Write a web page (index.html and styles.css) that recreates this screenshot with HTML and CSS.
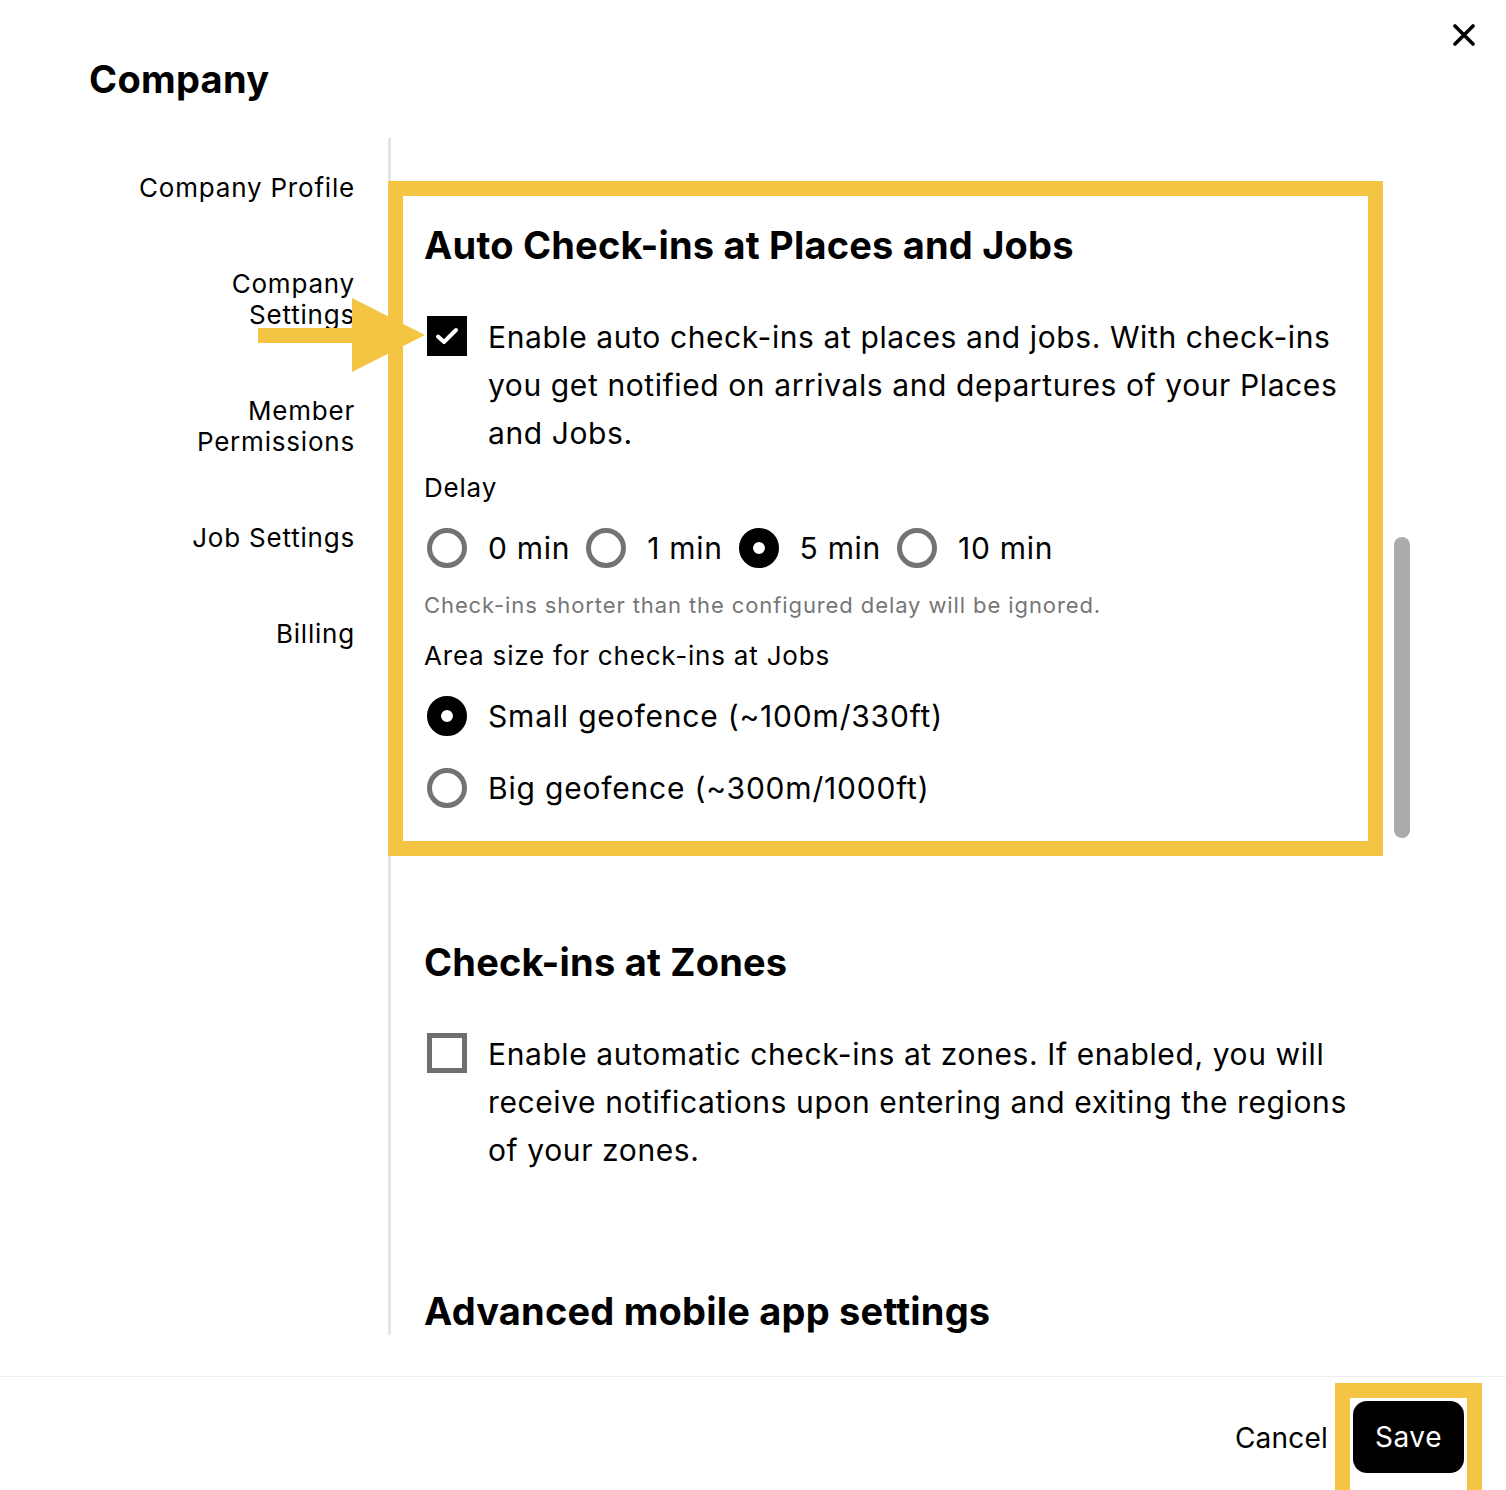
FILE: index.html
```html
<!DOCTYPE html>
<html>
<head>
<meta charset="utf-8">
<link rel="stylesheet" href="styles.css">
</head>
<body>
<div class="modal">
  <header class="modal-header">
    <h1 class="title">Company</h1>
    <button class="close" aria-label="Close">
      <svg width="22" height="22" viewBox="0 0 22 22"><path d="M2 2 L20 20 M20 2 L2 20" stroke="#000" stroke-width="3.6" stroke-linecap="round"/></svg>
    </button>
  </header>
  <div class="body">
    <nav class="sidebar">
      <a class="nav-item">Company Profile</a>
      <a class="nav-item">Company<br>Settings</a>
      <a class="nav-item">Member<br>Permissions</a>
      <a class="nav-item">Job Settings</a>
      <a class="nav-item">Billing</a>
    </nav>
    <main class="content">
      <section class="section highlight">
        <h2 class="heading first">Auto Check-ins at Places and Jobs</h2>
        <div class="check-row">
          <span class="checkbox checked">
            <svg width="24" height="20" viewBox="0 0 24 20"><path d="M3 10.5 L9 16 L21 4" stroke="#fff" stroke-width="4" fill="none" stroke-linecap="round" stroke-linejoin="round"/></svg>
          </span>
          <p class="check-text">Enable auto check-ins at places and jobs. With check-ins you get notified on arrivals and departures of your Places and Jobs.</p>
        </div>
        <div class="label delay-label">Delay</div>
        <div class="radio-inline">
          <span class="radio-opt"><span class="radio"></span>0 min</span>
          <span class="radio-opt"><span class="radio"></span>1 min</span>
          <span class="radio-opt"><span class="radio on"></span>5 min</span>
          <span class="radio-opt"><span class="radio"></span>10 min</span>
        </div>
        <div class="helper">Check-ins shorter than the configured delay will be ignored.</div>
        <div class="label area-label">Area size for check-ins at Jobs</div>
        <div class="radio-opt block small"><span class="radio on"></span>Small geofence (~100m/330ft)</div>
        <div class="radio-opt block big"><span class="radio"></span>Big geofence (~300m/1000ft)</div>
      </section>
      <section class="section zones">
        <h2 class="heading">Check-ins at Zones</h2>
        <div class="check-row">
          <span class="checkbox"></span>
          <p class="check-text">Enable automatic check-ins at zones. If enabled, you will receive notifications upon entering and exiting the regions of your zones.</p>
        </div>
      </section>
      <section class="section advanced">
        <h2 class="heading">Advanced mobile app settings</h2>
      </section>
      <div class="scrollbar"></div>
    </main>
    <svg class="arrow" width="168" height="75" viewBox="0 0 168 75"><path d="M0 30 H94 V0 L167 37 L94 74 V45 H0 Z" fill="#f4c542"/></svg>
  </div>
  <footer class="footer">
    <button class="cancel">Cancel</button>
    <span class="save-wrap"><button class="save">Save</button></span>
  </footer>
</div>
</body>
</html>
```

FILE: styles.css
```css
* { box-sizing: border-box; }
html, body { margin: 0; padding: 0; }
body {
  width: 1506px;
  height: 1490px;
  overflow: hidden;
  background: #fff;
  font-family: Inter, "Noto Sans", "Liberation Sans", sans-serif;
  color: #000;
}
.modal {
  width: 1506px;
  height: 1490px;
  display: flex;
  flex-direction: column;
  position: relative;
}
.modal-header {
  flex: none;
  height: 138px;
  padding: 57px 0 0 89px;
  position: relative;
}
.title {
  margin: 0;
  font-size: 38px;
  line-height: 44px;
  font-weight: 700;
  letter-spacing: 0.3px;
}
.close {
  position: absolute;
  top: 24px;
  left: 1453px;
  width: 22px;
  height: 22px;
  padding: 0;
  border: 0;
  background: none;
}
.close svg { display: block; }
.body {
  flex: none;
  display: flex;
  height: 1238px;
  position: relative;
}
.sidebar {
  width: 388px;
  flex: none;
  padding: 34px 33px 0 0;
  display: flex;
  flex-direction: column;
  align-items: flex-end;
  gap: 65px;
}
.nav-item {
  font-size: 26px;
  line-height: 31px;
  text-align: right;
  letter-spacing: 0.8px;
  color: #000;
}
.content {
  flex: 1;
  border-left: 3px solid #e6e6e6;
  height: 1197px;
  position: relative;
}
.section {
  width: 992px;
  padding-left: 33px;
}
.highlight {
  margin-top: 43px;
  margin-left: -3px;
  width: 995px;
  border: 15px solid #f4c542;
  padding: 27px 0 29px 21px;
  background: #fff;
}
.heading {
  margin: 0;
  font-size: 38px;
  line-height: 44px;
  font-weight: 700;
  letter-spacing: 0.2px;
}
.check-row {
  display: flex;
  align-items: flex-start;
  gap: 21px;
  margin-top: 46px;
}
.checkbox {
  flex: none;
  width: 40px;
  height: 40px;
  margin: 3px 0 0 3px;
  border: 5px solid #6e6e6e;
  display: flex;
  align-items: center;
  justify-content: center;
}
.checkbox.checked {
  background: #000;
  border-color: #000;
}
.check-text {
  margin: 0;
  font-size: 30px;
  line-height: 48px;
  letter-spacing: 0.6px;
  max-width: 870px;
}
.label {
  font-size: 26px;
  line-height: 32px;
  letter-spacing: 0.8px;
}
.delay-label { margin-top: 15px; }
.radio-inline {
  display: flex;
  gap: 13px;
  margin-top: 20px;
}
.radio-inline .radio-opt { letter-spacing: 0.7px; }
.radio-opt {
  display: flex;
  align-items: center;
  gap: 21px;
  font-size: 30px;
  line-height: 48px;
  letter-spacing: 0.8px;
}
.radio {
  flex: none;
  width: 40px;
  height: 40px;
  margin-left: 3px;
  border-radius: 50%;
  border: 5px solid #737373;
  background: #fff;
}
.radio.on {
  border: 14px solid #000;
  background: #fff;
}
.helper {
  margin-top: 19px;
  font-size: 22px;
  line-height: 28px;
  color: #767676;
  letter-spacing: 0.9px;
}
.area-label { margin-top: 21px; }
.block.small { margin-top: 20px; }
.block.big { margin-top: 24px; }
.zones { margin-top: 84px; }
.advanced { margin-top: 115px; }
.scrollbar {
  position: absolute;
  left: 1003px;
  top: 399px;
  width: 16px;
  height: 301px;
  border-radius: 8px;
  background: #ababab;
}
.arrow {
  position: absolute;
  left: 258px;
  top: 160px;
}
.footer {
  flex: none;
  height: 114px;
  overflow: hidden;
  border-top: 1px solid #efefef;
  display: flex;
  justify-content: flex-end;
  align-items: flex-start;
  padding: 6px 24px 0 0;
}
.cancel {
  border: 0;
  background: none;
  font-family: inherit;
  font-size: 28px;
  letter-spacing: 0.2px;
  color: #000;
  padding: 0;
  margin: 38px 7px 0 0;
  line-height: 34px;
}
.save-wrap {
  flex: none;
  border: 15px solid #f4c542;
  border-bottom: 0;
  padding: 3px 3px 0 3px;
  height: 113px;
}
.save {
  display: block;
  width: 111px;
  height: 72px;
  border: 0;
  border-radius: 14px;
  background: #000;
  color: #fff;
  font-family: inherit;
  font-size: 28px;
  letter-spacing: 0.6px;
  padding: 0;
}
```
